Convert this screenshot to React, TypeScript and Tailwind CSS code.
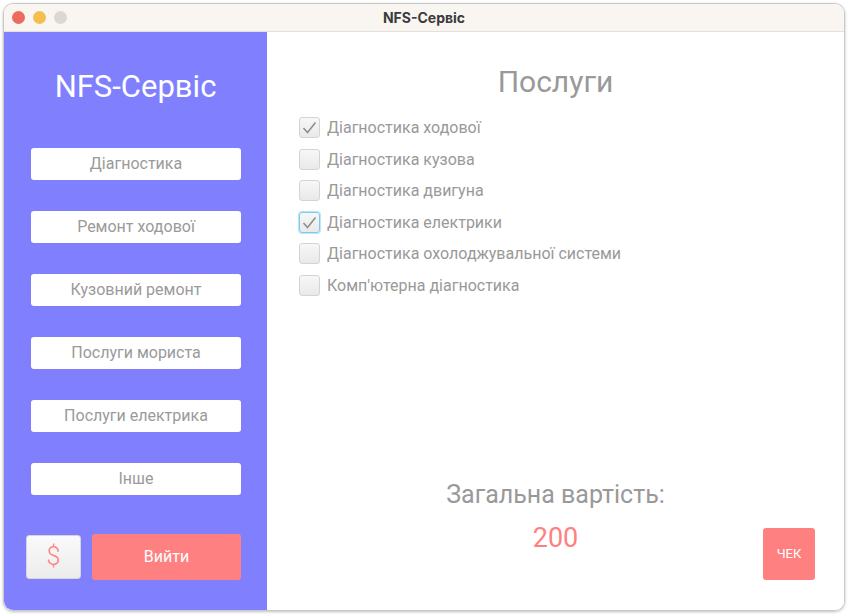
import React from "react";

const menu = [
  "Діагностика",
  "Ремонт ходової",
  "Кузовний ремонт",
  "Послуги мориста",
  "Послуги електрика",
  "Інше",
];

const services = [
  { label: "Діагностика ходової", checked: true, focus: false },
  { label: "Діагностика кузова", checked: false, focus: false },
  { label: "Діагностика двигуна", checked: false, focus: false },
  { label: "Діагностика електрики", checked: true, focus: true },
  { label: "Діагностика охолоджувальної системи", checked: false, focus: false },
  { label: "Комп'ютерна діагностика", checked: false, focus: false },
];

const Check = ({ checked, focus }: { checked: boolean; focus: boolean }) => (
  <div
    className={`flex h-[21px] w-[21px] items-center justify-center rounded-[3px] border bg-gradient-to-b from-[#f7f7f7] to-[#e9e9e9] ${
      focus ? "border-[#7ccbee] ring-1 ring-[#bfe6f7]" : "border-[#d4d4d4]"
    }`}
  >
    {checked && (
      <svg width="15" height="13" viewBox="0 0 15 13">
        <path d="M1.5 7 L5.5 11.5 L13.5 1.5" fill="none" stroke="#8f8f8f" strokeWidth="1.6" />
      </svg>
    )}
  </div>
);

export default function App() {
  return (
    <div
      className="h-[614px] w-[848px] bg-white px-[3px] pt-[3px]"
      style={{ fontFamily: "Roboto, 'Noto Sans', sans-serif" }}
    >
      <div className="flex h-[608px] flex-col overflow-hidden rounded-[10px] border border-[#c9c9c9] shadow-[0_1px_3px_rgba(0,0,0,0.25)]">
        <div
          className="relative flex h-[28px] items-center justify-center border-b border-[#e4e0dc] bg-[#f9f5f1]"
          style={{ fontFamily: "Inter, sans-serif" }}
        >
          <div className="absolute left-[8px] top-[7px] flex gap-[8px]">
            <span className="h-[13px] w-[13px] rounded-full bg-[#ec6a5e]" />
            <span className="h-[13px] w-[13px] rounded-full bg-[#f4bf4f]" />
            <span className="h-[13px] w-[13px] rounded-full bg-[#dcd7d3]" />
          </div>
          <span className="text-[14px] font-bold text-[#3b3b3b]">NFS-Сервіс</span>
        </div>
        <div className="flex flex-1">
          <div className="flex w-[263px] flex-col bg-[#8080ff]">
            <div className="mt-[36px] text-center text-[31px] leading-[38px] text-white">NFS-Сервіс</div>
            <div className="mt-[42px] flex flex-col gap-[31px] pl-[27px]">
              {menu.map((m) => (
                <button
                  key={m}
                  className="h-[32px] w-[210px] rounded-[3px] bg-white text-[16px] text-[#9a9a9a]"
                >
                  {m}
                </button>
              ))}
            </div>
            <div className="mt-[39px] flex items-center gap-[11px] pl-[22px]">
              <button className="h-[44px] w-[55px] rounded-[3px] border border-[#d6d6d6] bg-gradient-to-b from-[#fafafa] to-[#ececec] text-[25px] font-light text-[#ff8080]">
                $
              </button>
              <button className="h-[46px] w-[149px] rounded-[3px] bg-[#ff8080] text-[16px] text-white">
                Вийти
              </button>
            </div>
          </div>
          <div className="flex flex-1 flex-col bg-white">
            <div className="mt-[32px] text-center text-[30px] leading-[36px] text-[#999999]">Послуги</div>
            <div className="mt-[17px] flex flex-col gap-[10.6px] pl-[32px]">
              {services.map((s) => (
                <div key={s.label} className="flex items-center gap-[7px]">
                  <Check checked={s.checked} focus={s.focus} />
                  <span className="text-[16px] leading-[21px] text-[#999999]">{s.label}</span>
                </div>
              ))}
            </div>
            <div className="flex-1" />
            <div className="relative mb-[56px] flex flex-col items-center">
              <div className="text-[25px] leading-[30px] text-[#999999]">Загальна вартість:</div>
              <div className="mt-[12px] text-[27px] leading-[32px] text-[#ff8080]">200</div>
              <button className="absolute bottom-[-26px] right-[29px] h-[52px] w-[52px] rounded-[3px] bg-[#ff8080] text-[13px] text-white">
                ЧЕК
              </button>
            </div>
          </div>
        </div>
      </div>
    </div>
  );
}
